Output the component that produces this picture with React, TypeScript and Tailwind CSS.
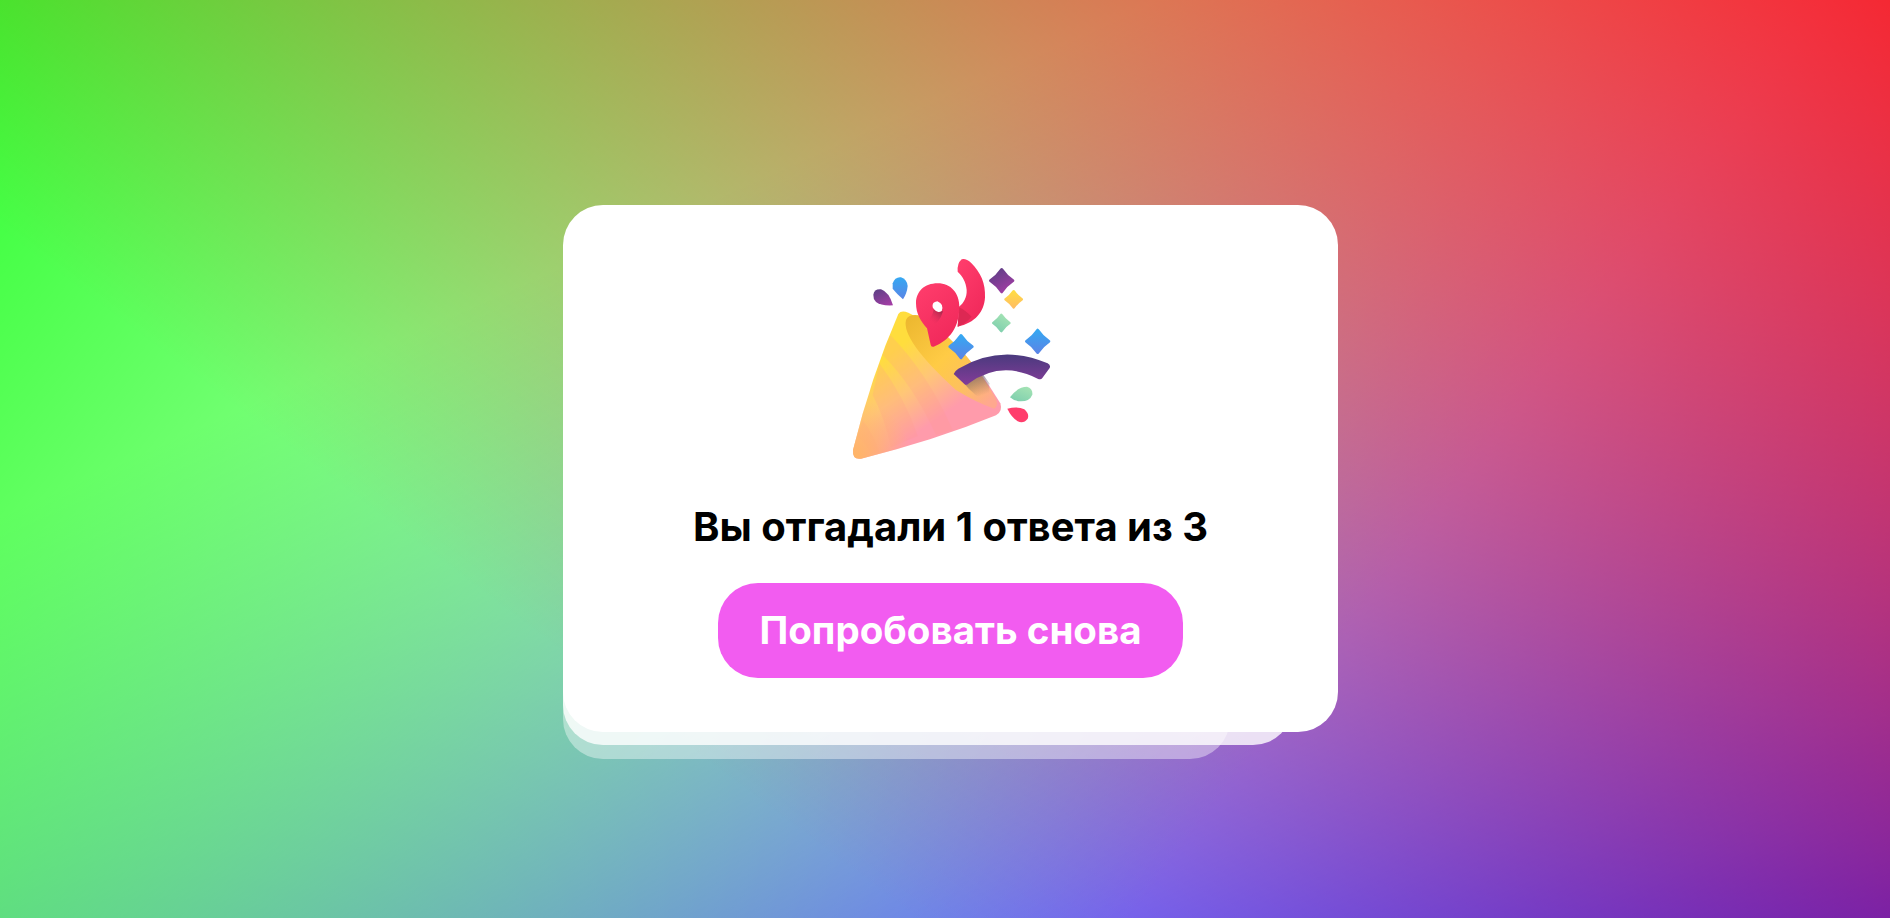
const Diamond = ({ cx, cy, r, fill }: { cx: number; cy: number; r: number; fill: string }) => {
  const c = r * 0.4
  return (
    <path
      d={`M${cx} ${cy - r}Q${cx + c} ${cy - c} ${cx + r} ${cy}Q${cx + c} ${cy + c} ${cx} ${cy + r}Q${cx - c} ${cy + c} ${cx - r} ${cy}Q${cx - c} ${cy - c} ${cx} ${cy - r}Z`}
      fill={fill}
      stroke={fill}
      strokeWidth="8"
      strokeLinejoin="round"
    />
  )
}

const conePath = "M232 222Q240 210 262 218Q420 290 538 490Q546 515 525 526Q340 602 120 656Q94 660 96 630Q150 410 232 222Z"

const Popper = () => (
  <svg className="block h-[230px] w-[260px]" viewBox="0 0 780 690" xmlns="http://www.w3.org/2000/svg">
    <defs>
      <linearGradient id="cone" gradientUnits="userSpaceOnUse" x1="205" y1="340" x2="345" y2="540">
        <stop offset="0" stopColor="#ffdd3d" />
        <stop offset="0.5" stopColor="#ffc677" />
        <stop offset="1" stopColor="#ff9bab" />
      </linearGradient>
      <radialGradient id="tip" gradientUnits="userSpaceOnUse" cx="100" cy="650" r="170">
        <stop offset="0" stopColor="#ffb566" />
        <stop offset="1" stopColor="#ffb566" stopOpacity="0" />
      </radialGradient>
      <linearGradient id="inner" gradientUnits="userSpaceOnUse" x1="260" y1="240" x2="500" y2="490">
        <stop offset="0" stopColor="#edb830" />
        <stop offset="0.45" stopColor="#ffcb45" />
        <stop offset="0.75" stopColor="#fdc05f" />
        <stop offset="1" stopColor="#ffa88e" />
      </linearGradient>
      <linearGradient id="shade" gradientUnits="userSpaceOnUse" x1="450" y1="405" x2="472" y2="470">
        <stop offset="0" stopColor="#6f5a6a" stopOpacity="0.75" />
        <stop offset="1" stopColor="#6f5a6a" stopOpacity="0" />
      </linearGradient>
      <linearGradient id="red" x1="0.1" y1="0" x2="0.7" y2="1">
        <stop offset="0" stopColor="#ff3d6c" />
        <stop offset="1" stopColor="#f0285a" />
      </linearGradient>
      <linearGradient id="fold" gradientUnits="userSpaceOnUse" x1="365" y1="215" x2="335" y2="250">
        <stop offset="0" stopColor="#a02a4c" />
        <stop offset="1" stopColor="#ee2c5c" stopOpacity="0" />
      </linearGradient>
      <linearGradient id="band" x1="0" y1="0" x2="0" y2="1">
        <stop offset="0" stopColor="#4a3a7e" />
        <stop offset="1" stopColor="#833c98" />
      </linearGradient>
      <linearGradient id="blue" x1="0.5" y1="0" x2="0.5" y2="1">
        <stop offset="0" stopColor="#35a8f2" />
        <stop offset="1" stopColor="#5a85e6" />
      </linearGradient>
      <linearGradient id="violet" x1="0.2" y1="0" x2="0.8" y2="1">
        <stop offset="0" stopColor="#5f3f86" />
        <stop offset="1" stopColor="#a33da5" />
      </linearGradient>
      <linearGradient id="mint" x1="0.8" y1="0" x2="0.2" y2="1">
        <stop offset="0" stopColor="#a4e3b4" />
        <stop offset="1" stopColor="#7fcfae" />
      </linearGradient>
      <linearGradient id="gold" x1="0.5" y1="0" x2="0.5" y2="1">
        <stop offset="0" stopColor="#ffdc45" />
        <stop offset="1" stopColor="#ffbe63" />
      </linearGradient>
    </defs>

    <path d={conePath} fill="url(#cone)" />
    <g fill="#ff9a8c" opacity="0.2">
      <path d="M208 285Q320 400 395 570L345 585Q280 440 185 345Z" />
      <path d="M175 370Q250 470 290 588L210 622Q190 530 155 465Z" />
      <path d="M125 540Q155 580 175 635L150 642Q135 610 110 590Z" />
    </g>
    <path d={conePath} fill="url(#tip)" />
    <path d="M255 240Q262 222 292 226Q420 300 515 460Q538 495 520 506Q470 490 405 450Q240 300 255 240Z" fill="url(#inner)" />
    <path d="M425 425L470 380L505 430L505 488Q460 470 425 425Z" fill="url(#shade)" />

    <path
      d="M422 58Q434 54 450 68C480 98 494 130 492 172C490 215 462 250 410 260L414 200C428 190 438 172 437 150C435 125 424 108 410 95Q408 70 422 58Z"
      fill="url(#red)"
    />
    <path d="M414 202Q432 210 452 230Q432 252 410 260Z" fill="#dd2853" />
    <path
      d="M318 265C300 245 285 222 285 190C285 155 310 130 350 130C390 130 415 160 415 200C415 275 372 306 338 320Q330 322 329 314ZM349 184Q332 186 335 202Q346 222 362 214Q370 192 349 184Z"
      fill="url(#red)"
      fillRule="evenodd"
    />
    <path d="M362 214Q350 222 338 208Q335 232 318 240Q322 252 326 262Q356 250 366 214Z" fill="url(#fold)" />

    <Diamond cx={420} cy={320} r={34} fill="url(#blue)" />
    <path
      d="M398 402Q400 394 412 386Q540 310 680 370Q690 376 686 384L664 414Q660 420 650 416Q540 360 444 430Q436 438 430 432Z"
      fill="url(#band)"
    />

    <path d="M157 164Q160 146 180 148Q204 156 216 196Q180 198 165 186Q156 176 157 164Z" fill="url(#violet)" />
    <path d="M215 130Q222 110 240 112Q258 118 260 138Q258 160 246 178Q226 160 215 146Z" fill="url(#blue)" />
    <Diamond cx={542} cy={122} r={34} fill="url(#violet)" />
    <Diamond cx={578} cy={178} r={24} fill="url(#gold)" />
    <Diamond cx={541} cy={249} r={24} fill="url(#mint)" />
    <Diamond cx={650} cy={304} r={34} fill="url(#blue)" />
    <path d="M567 472Q590 440 618 440Q636 446 634 464Q626 484 600 484Q580 484 567 472Z" fill="url(#mint)" />
    <path d="M559 506Q590 498 610 508Q626 522 620 536Q608 552 590 544Q570 530 559 506Z" fill="#ff3d6c" />
  </svg>
)

export default function App() {
  return (
    <div className="flex min-h-[918px] w-full justify-center overflow-hidden bg-white bg-[linear-gradient(217deg,rgba(255,0,0,0.8),rgba(255,0,0,0)_70.71%),linear-gradient(127deg,rgba(0,255,0,0.8),rgba(0,255,0,0)_70.71%),linear-gradient(336deg,rgba(0,0,255,0.8),rgba(0,0,255,0)_70.71%)] pt-[205px] pl-[11px] font-['Inter','Noto_Sans',sans-serif]">
      <div className="relative h-[527px] w-[775px]">
        <div className="absolute top-[27px] left-0 h-[527px] w-[667px] rounded-[40px] bg-white/40" />
        <div className="absolute top-[13px] left-0 h-[527px] w-[730px] rounded-[40px] bg-white/80" />
        <div className="relative flex h-full flex-col items-center rounded-[40px] bg-white pt-[35px]">
          <Popper />
          <h1 className="mt-[33px] text-[40px] leading-[48px] font-bold text-black">Вы отгадали 1 ответа из 3</h1>
          <button className="mt-[32px] flex h-[95px] w-[465px] items-center justify-center rounded-[40px] bg-[#f25cf0] text-[38.5px] font-bold text-white">
            Попробовать снова
          </button>
        </div>
      </div>
    </div>
  )
}
